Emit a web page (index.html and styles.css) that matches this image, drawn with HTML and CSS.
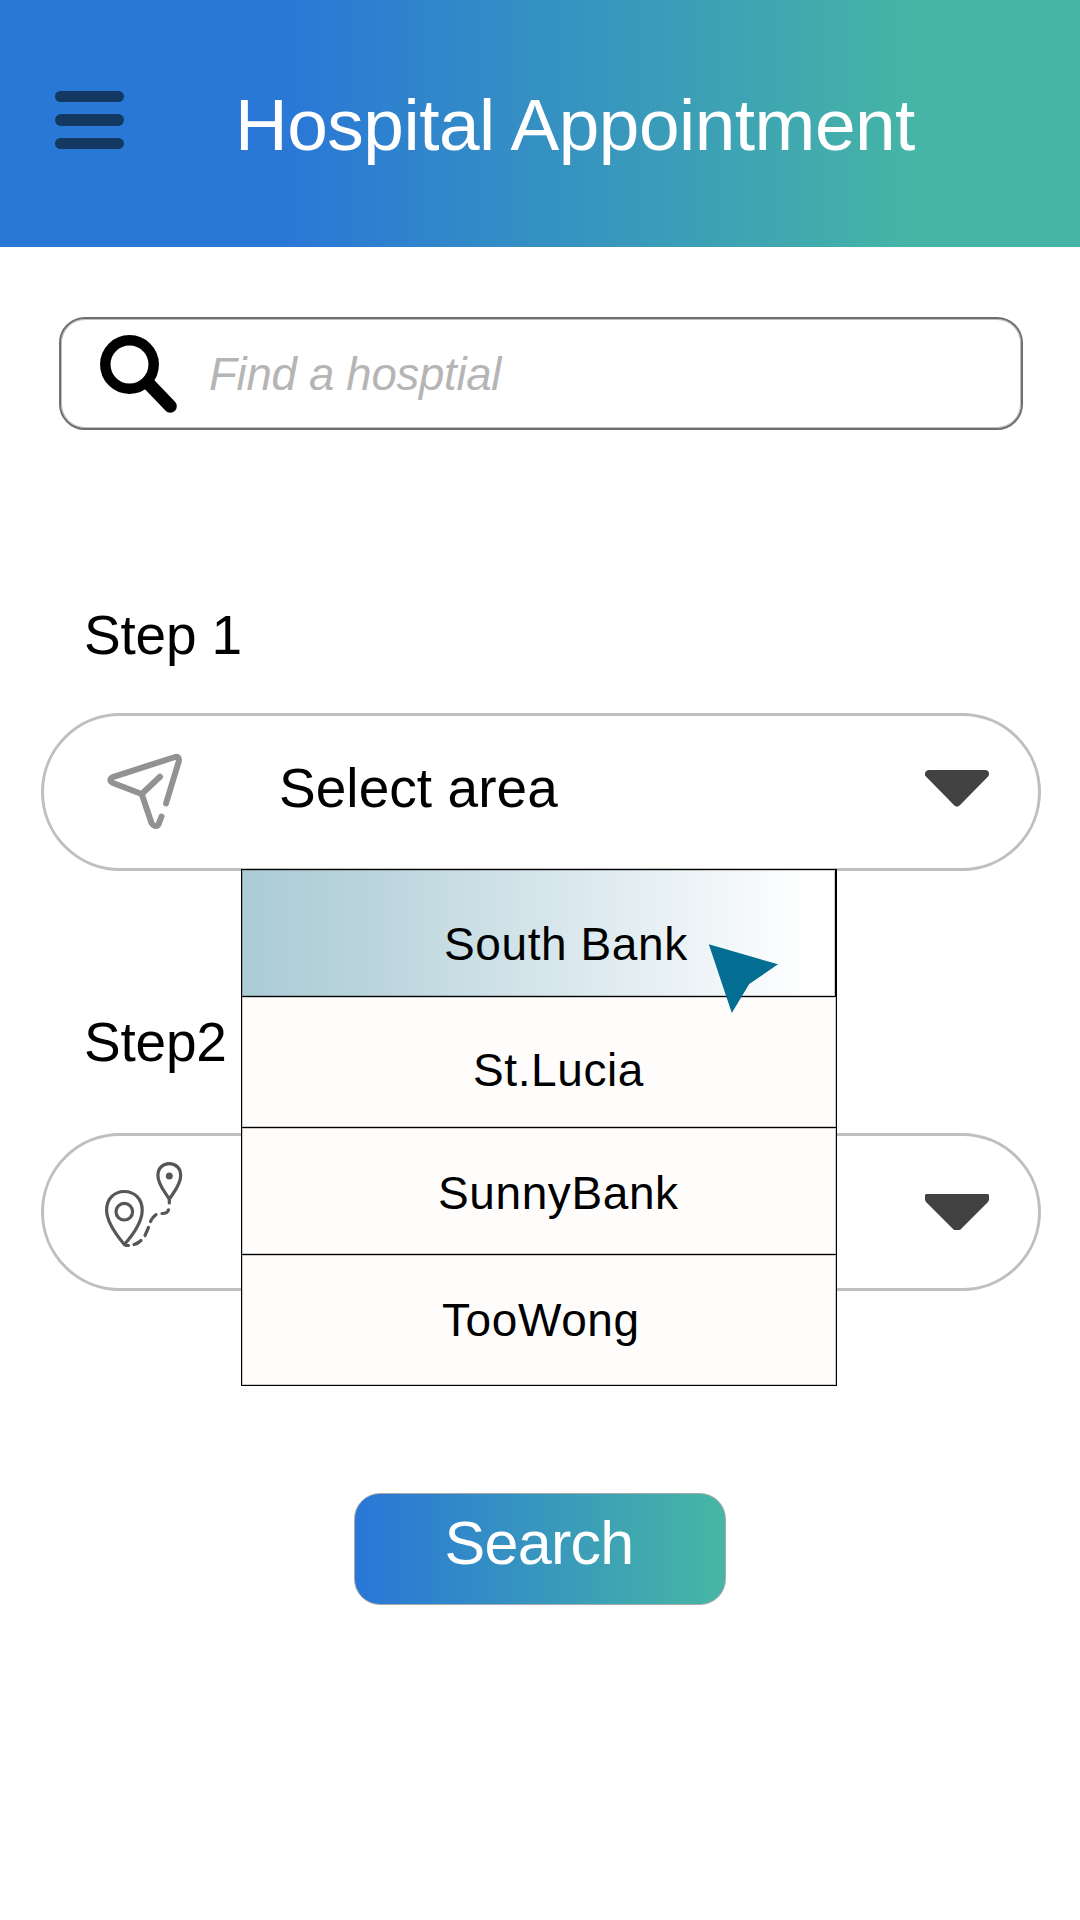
FILE: index.html
```html
<!DOCTYPE html>
<html lang="en">
<head>
<meta charset="utf-8">
<title>Hospital Appointment</title>
<link rel="stylesheet" href="styles.css">
</head>
<body>
<header class="topbar">
  <button class="menu-button" aria-label="Menu"><span></span><span></span><span></span></button>
  <h1 class="title">Hospital Appointment</h1>
</header>
<main class="content">
  <div class="search-field">
    <svg class="search-icon" viewBox="0 0 78 80" width="78" height="80">
      <circle cx="29.5" cy="29.5" r="24.2"/>
      <path d="M48.5 48.5L70.3 71.3"/>
    </svg>
    <span class="placeholder">Find a hosptial</span>
  </div>

  <h2 class="step step-one">Step 1</h2>
  <div class="select">
    <svg class="select-icon plane" viewBox="0 0 80 80" width="80" height="80">
      <path d="M62 53.500L74.600 12Q76 6 71 7L9.500 26.800Q3.500 29.700 9 33L37.700 44L56 26.700M37.700 44L47.500 73Q50.500 77.800 54.200 75L57.500 66.500"/>
    </svg>
    <span class="select-label">Select area</span>
    <svg class="caret" viewBox="0 0 64 37" width="64" height="37"><path d="M4 4H60L32 32.500Z"/></svg>
    <ul class="options">
      <li class="option active">South Bank</li>
      <li class="option lucia">St.Lucia</li>
      <li class="option sunny">SunnyBank</li>
      <li class="option wong">TooWong</li>
    </ul>
    <svg class="cursor" viewBox="0 0 72 70" width="72" height="70"><path d="M.800.300L70 20.300L41.200 40L23.800 69Z"/></svg>
  </div>

  <h2 class="step step-two">Step2</h2>
  <div class="select">
    <svg class="select-icon route" viewBox="0 0 80 88" width="80" height="88">
      <path d="M24.300 84.500C18 77 6.600 63 6.600 50C6.600 39 14 31.500 24.300 31.500S42.200 39 42.200 50C42.200 63 31 77 24.300 84.500Z"/>
      <circle cx="24.300" cy="51.700" r="8.300"/>
      <path d="M69.300 39.200C66 33 57.900 25 57.900 15.500C57.900 8 63 3.600 69.300 3.600S80.700 8 80.700 15.500C80.700 25 73 33 69.300 39.200V43"/>
      <circle class="dot" cx="69.300" cy="16" r="3.500"/>
      <path d="M26 85.500H28.500M34 84.500Q38 83.500 41 80.500M45 75.500L48.500 67.500M50.500 61.500Q52.500 57 56 54.700M62 53.500Q67.500 53.500 68.500 49.800"/>
    </svg>
    <svg class="caret caret-flat" viewBox="0 0 64 36" width="64" height="36"><path d="M1 0H63L64 1V6L63 8L35 36H29L1 8L0 6V1Z"/></svg>
  </div>

  <button class="submit">Search</button>
</main>
</body>
</html>
```
FILE: styles.css
```css
* { box-sizing: border-box; }

body {
  margin: 0;
  min-height: 1920px;
  background: #fff;
  color: #000;
  font-family: "Liberation Sans", Arial, sans-serif;
}

button {
  border: 0;
  padding: 0;
  background: none;
  font-family: inherit;
}

.topbar {
  display: flex;
  align-items: flex-start;
  height: 247px;
  padding-left: 55px;
  background: linear-gradient(90deg, #2a78d6 27%, #3091c3 50%, #46b5a5 85%);
  background: linear-gradient(90deg, #2a78d6 27%, #46b5a5 85%);
}

.menu-button {
  display: flex;
  flex-direction: column;
  gap: 12.200px;
  width: 69px;
  margin-top: 91px;
}

.menu-button span {
  height: 11.200px;
  border-radius: 6px;
  background: #133963;
}

.title {
  margin: 88px 0 0 111px;
  color: #fff;
  font-size: 73px;
  font-weight: 400;
  line-height: 1;
  letter-spacing: -0.500px;
  white-space: nowrap;
}

.content {
  display: flex;
  flex-direction: column;
  padding: 70px 39px 0 41px;
}

.search-field {
  display: flex;
  height: 113px;
  margin: 0 18px;
  padding: 16px 0 0 39px;
  border: 2px solid #6f6f6f;
  border-radius: 26px;
  box-shadow: inset 0 0 0 1px rgba(0, 0, 0, 0.250);
}

.search-icon {
  fill: none;
  stroke: #000;
  stroke-width: 10.500;
}

.search-icon path {
  stroke-width: 13;
  stroke-linecap: round;
}

.placeholder {
  margin: 17px 0 0 31px;
  color: #b6b5b5;
  font-size: 45.500px;
  font-style: italic;
  line-height: 1;
  letter-spacing: -0.250px;
}

.step {
  margin: 0;
  padding-left: 43px;
  font-size: 55px;
  font-weight: 400;
  line-height: 54px;
  letter-spacing: -0.200px;
}

.step-one { margin: 178px 0 51px; }
.step-two { margin: 144px 0 64px; }

.select {
  position: relative;
  display: flex;
  height: 158px;
  padding: 0 49px 0 60px;
  border: 3px solid #bfbfbf;
  border-radius: 79px;
}

.select-icon {
  fill: none;
  stroke-linecap: round;
  stroke-linejoin: round;
  overflow: visible;
}

.plane {
  margin-top: 34px;
  stroke: #929292;
  stroke-width: 6;
}

.route {
  margin: 24px 0 0 -4px;
  stroke: #565656;
  stroke-width: 3.200;
}

.route .dot {
  fill: #565656;
  stroke: none;
}

.select-label {
  margin: 45px 0 0 95px;
  font-size: 55px;
  line-height: 1;
  letter-spacing: 0.050px;
}

.caret {
  margin: 54px 0 0 auto;
  fill: #424242;
  stroke: #424242;
  stroke-width: 8;
  stroke-linejoin: round;
}

.caret-flat {
  margin-top: 58px;
  stroke: none;
}

/* Open list, floating over the second step */
.options {
  position: absolute;
  top: 153px;
  left: 197px;
  z-index: 1;
  width: 596px;
  margin: 0;
  padding: 0;
  border: 1px solid #000;
  border-top: 0;
  background: #fefdfc;
  list-style: none;
}

.option {
  height: 131px;
  border-top: 1px solid #000;
  box-shadow: inset 0 0 0 1px rgba(0, 0, 0, 0.200);
  font-size: 46px;
  line-height: 0;
  letter-spacing: 0.600px;
}

.active {
  height: 127px;
  padding: 74px 0 0 202px;
  border-right: 1px solid #000;
  background: linear-gradient(90deg, #abccd6, #b8d3db 19%, #dfebf0 61%, #fff 96%);
}

.lucia { padding: 73px 0 0 231px; }

.sunny {
  height: 127px;
  padding: 65px 0 0 196px;
}

.wong {
  height: 131px;
  padding: 65px 0 0 200px;
}

.cursor {
  position: absolute;
  top: 228px;
  left: 664px;
  z-index: 2;
  fill: #046d92;
}

.submit {
  width: 372px;
  height: 112px;
  margin: 202px 0 0 313px;
  padding: 0 2px 12px 0;
  border: 1px solid #aaa;
  border-radius: 26px;
  background: linear-gradient(90deg, #2a78d6 3%, #46b5a5 97%);
  color: #fff;
  font-size: 61px;
  line-height: 1;
  letter-spacing: -0.700px;
}
```
